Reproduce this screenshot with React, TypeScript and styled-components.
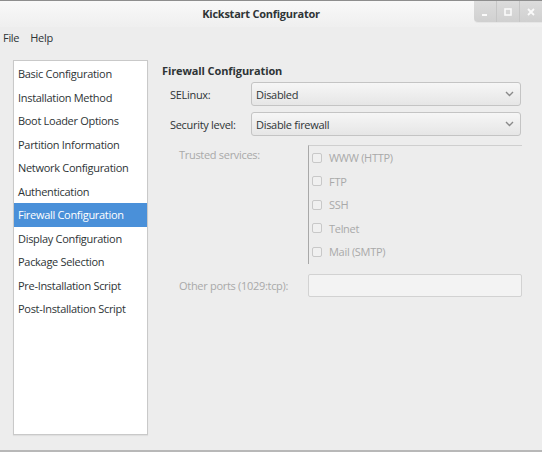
import React from "react";
import styled, { createGlobalStyle } from "styled-components";

const GlobalStyle = createGlobalStyle`
  html, body {
    margin: 0;
    padding: 0;
    background: #ededed;
  }
  body {
    font-family: "Open Sans", "Liberation Sans", sans-serif;
    font-size: 11px;
    letter-spacing: -0.3px;
    color: #2e3436;
  }
`;

const Window = styled.div`
  width: 542px;
  height: 452px;
  box-sizing: border-box;
  display: flex;
  flex-direction: column;
  background: #ededed;
  border-top: 1px solid #8e8e8e;
  border-bottom: 2px solid #b8b8b8;
  overflow: hidden;
`;

const TitleBar = styled.div`
  height: 26px;
  flex: none;
  display: grid;
  grid-template-columns: 1fr auto 1fr;
  align-items: start;
  background: linear-gradient(180deg, #f9f9f9 0%, #efefef 100%);
`;

const Title = styled.div`
  grid-column: 2;
  padding-right: 20px;
  line-height: 25px;
  font-weight: 700;
  font-size: 11px;
  letter-spacing: -0.25px;
  color: #2e3436;
`;

const WindowButtons = styled.div`
  grid-column: 3;
  justify-self: end;
  display: flex;
  height: 21px;
  border-bottom-left-radius: 4px;
  overflow: hidden;
  background: linear-gradient(180deg, #dcdcdc 0%, #d0d0d0 100%);
  box-shadow: 0 1px 0 #e6e6e6;
`;

const WinButton = styled.div`
  width: 22px;
  display: flex;
  align-items: center;
  justify-content: center;
  border-left: 1px solid #c6c6c6;
  &:first-child {
    border-left: none;
  }
`;

const MenuBar = styled.div`
  height: 21px;
  flex: none;
  display: flex;
  align-items: center;
  gap: 11px;
  padding-left: 3px;
`;

const Body = styled.div`
  flex: 1;
  display: flex;
  padding: 12px 0 0 13px;
  gap: 14px;
`;

const Sidebar = styled.div`
  width: 135px;
  height: 375px;
  box-sizing: border-box;
  background: #fff;
  border: 1px solid #c9c9c9;
  box-shadow: 0 1px 1px rgba(0, 0, 0, 0.06);
  padding-top: 1px;
  display: flex;
  flex-direction: column;
`;

const NavItem = styled.div<{ $active?: boolean }>`
  height: 23.5px;
  flex: none;
  display: flex;
  align-items: center;
  padding-left: 4px;
  white-space: nowrap;
  background: ${(p) => (p.$active ? "#4a90d9" : "transparent")};
  color: ${(p) => (p.$active ? "#fff" : "#2e3436")};
`;

const Content = styled.div`
  flex: 1;
  display: flex;
  flex-direction: column;
  padding-right: 20px;
`;

const Heading = styled.div`
  font-weight: 700;
  letter-spacing: -0.1px;
  height: 21px;
  display: flex;
  align-items: center;
`;

const ComboGrid = styled.div`
  display: grid;
  grid-template-columns: 81px 270px;
  row-gap: 6px;
  padding-left: 8px;
  align-items: center;
  margin-top: 1px;
`;

const Label = styled.div<{ $disabled?: boolean }>`
  color: ${(p) => (p.$disabled ? "#a9a9a9" : "#2e3436")};
  white-space: nowrap;
`;

const Combo = styled.div`
  height: 24px;
  box-sizing: border-box;
  border: 1px solid #c4c4c4;
  border-radius: 3px;
  background: linear-gradient(180deg, #f6f6f6 0%, #e6e6e6 100%);
  display: flex;
  align-items: center;
  justify-content: space-between;
  padding: 0 6px 0 4px;
  color: #2e3436;
`;

const Trusted = styled.div`
  display: grid;
  grid-template-columns: 129px 214px;
  padding-left: 17px;
  margin-top: 9px;
  row-gap: 10px;
`;

const TrustedLabel = styled(Label)`
  padding-top: 2px;
`;

const ServiceFrame = styled.div`
  border-top: 1px solid #cfcfcf;
  border-left: 1px solid #a8a8a8;
  display: flex;
  flex-direction: column;
  padding-left: 3px;
`;

const ServiceRow = styled.label`
  height: 23.5px;
  display: flex;
  align-items: center;
  gap: 7px;
  color: #a9a9a9;
`;

const CheckBox = styled.span`
  width: 10px;
  height: 10px;
  box-sizing: border-box;
  border: 1px solid #c8c8c8;
  border-radius: 2px;
  background: #f0f0f0;
`;

const PortsLabel = styled(Label)`
  align-self: center;
`;

const Entry = styled.div`
  height: 23px;
  box-sizing: border-box;
  border: 1px solid #d2d2d2;
  border-radius: 2px;
  background: #f3f3f3;
`;

const Chevron = () => (
  <svg width="9" height="6" viewBox="0 0 9 6">
    <path d="M1 1 L4.5 4.5 L8 1" fill="none" stroke="#8a8a8a" strokeWidth="1.4" />
  </svg>
);

const navItems = [
  "Basic Configuration",
  "Installation Method",
  "Boot Loader Options",
  "Partition Information",
  "Network Configuration",
  "Authentication",
  "Firewall Configuration",
  "Display Configuration",
  "Package Selection",
  "Pre-Installation Script",
  "Post-Installation Script",
];

const services = ["WWW (HTTP)", "FTP", "SSH", "Telnet", "Mail (SMTP)"];

const App: React.FC = () => {
  return (
    <>
      <GlobalStyle />
      <Window>
        <TitleBar>
          <Title>Kickstart Configurator</Title>
          <WindowButtons>
            <WinButton>
              <svg width="8" height="8" viewBox="0 0 8 8">
                <rect x="1" y="6" width="5" height="2" fill="#fafafa" />
              </svg>
            </WinButton>
            <WinButton>
              <svg width="8" height="8" viewBox="0 0 8 8">
                <rect x="1" y="1" width="6" height="6" fill="none" stroke="#fafafa" strokeWidth="1.6" />
              </svg>
            </WinButton>
            <WinButton>
              <svg width="8" height="8" viewBox="0 0 8 8">
                <path d="M1 1 L7 7 M7 1 L1 7" stroke="#fafafa" strokeWidth="1.8" />
              </svg>
            </WinButton>
          </WindowButtons>
        </TitleBar>
        <MenuBar>
          <span>File</span>
          <span>Help</span>
        </MenuBar>
        <Body>
          <Sidebar>
            {navItems.map((item) => (
              <NavItem key={item} $active={item === "Firewall Configuration"}>
                {item}
              </NavItem>
            ))}
          </Sidebar>
          <Content>
            <Heading>Firewall Configuration</Heading>
            <ComboGrid>
              <Label>SELinux:</Label>
              <Combo>
                <span>Disabled</span>
                <Chevron />
              </Combo>
              <Label>Security level:</Label>
              <Combo>
                <span>Disable firewall</span>
                <Chevron />
              </Combo>
            </ComboGrid>
            <Trusted>
              <TrustedLabel $disabled>Trusted services:</TrustedLabel>
              <ServiceFrame>
                {services.map((s) => (
                  <ServiceRow key={s}>
                    <CheckBox />
                    {s}
                  </ServiceRow>
                ))}
              </ServiceFrame>
              <PortsLabel $disabled>Other ports (1029:tcp):</PortsLabel>
              <Entry />
            </Trusted>
          </Content>
        </Body>
      </Window>
    </>
  );
};

export default App;
